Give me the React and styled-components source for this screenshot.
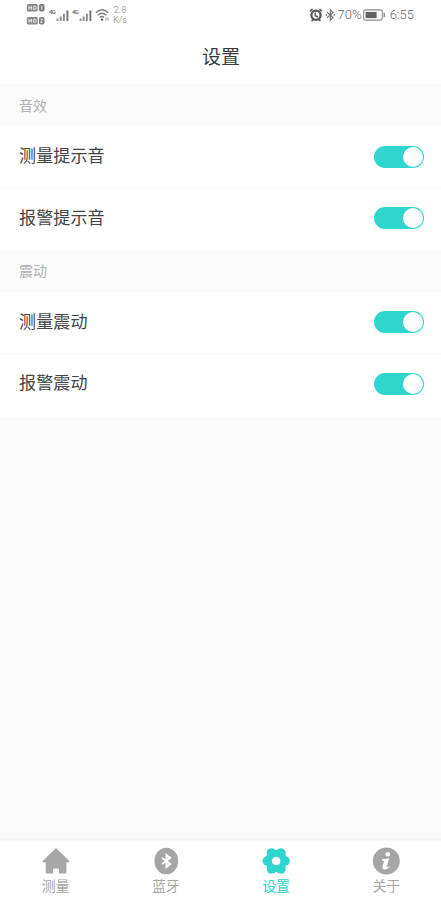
import React, { useState } from 'react'
import styled, { createGlobalStyle } from 'styled-components'

const ACCENT = '#2fd6cd'
const MUTED = '#a6a6a6'

const sections = [
  {
    title: '音效',
    rows: [
      { id: 'measureSound', label: '测量提示音' },
      { id: 'alarmSound', label: '报警提示音' },
    ],
  },
  {
    title: '震动',
    rows: [
      { id: 'measureVibration', label: '测量震动' },
      { id: 'alarmVibration', label: '报警震动' },
    ],
  },
]

const HdIcon = ({ sim }) => (
  <svg width='20' height='10' viewBox='0 0 20 10'>
    <rect x='0.8' y='1' width='11' height='7.6' rx='1.5' fill='#8a8a8a' />
    <path
      d='M3 3v3.6M5.4 3v3.6M3 4.8h2.4M7.6 3.2v3.2h1.1a1.6 1.6 0 0 0 0-3.2z'
      stroke='#f3f3f3'
      strokeWidth='0.9'
      fill='none'
    />
    <rect x='13' y='1' width='5.5' height='7.6' rx='1.8' fill='#7c7c7c' />
    {sim === 1 ? (
      <path d='M15.8 3v3.6' stroke='#fff' />
    ) : (
      <path d='M14.6 3.2h2l-2 3.2h2.2' stroke='#fff' strokeWidth='0.8' fill='none' />
    )}
  </svg>
)

const SignalIcon = () => (
  <svg width='14' height='12' viewBox='0 0 14 12'>
    <path d='M1.5 12V9.4M4.7 12V7.4M7.9 12V4.8' stroke='#8b8b8b' strokeWidth='1.9' />
    <path d='M11.4 12V1.4' stroke='#757575' strokeWidth='1.9' />
  </svg>
)

const WifiIcon = () => (
  <svg width='15' height='14' viewBox='0 0 15 14'>
    <g fill='none' stroke='#7b7b7b' strokeWidth='1.5'>
      <path d='M0.8 4.8Q7 -1.2 13.2 4.8' />
      <path d='M2.8 7.2Q7 3.3 11.2 7.2' />
      <path d='M4.8 9.5Q7 7.5 9.2 9.5' />
    </g>
    <circle cx='7' cy='11.6' r='1.2' fill='#555' />
    <path d='M11 9.5v3M13 9.5v3' stroke='#8a8a8a' strokeWidth='0.9' />
  </svg>
)

const AlarmIcon = () => (
  <svg width='14' height='14' viewBox='0 0 14 14'>
    <path d='M1 3.4 3.6 1M13 3.4 10.4 1M2.6 13l1.6-1.6M11.4 13l-1.6-1.6' stroke='#666' strokeWidth='1.8' />
    <circle cx='7' cy='7.3' r='4.6' fill='none' stroke='#555' strokeWidth='2.3' />
    <path d='M6.2 4.5v3.2L9 9' fill='none' stroke='#555' strokeWidth='1.4' />
  </svg>
)

const BluetoothIcon = () => (
  <svg width='11' height='14' viewBox='0 0 11 14'>
    <path
      d='M2 4.2l6 5.2-2.6 2.9V1.7L8 4.6 2 9.8'
      fill='none'
      stroke='#757575'
      strokeWidth='1.2'
    />
    <path d='M0.6 7h1.6M8.6 7h1.6' stroke='#757575' strokeWidth='1.4' />
  </svg>
)

const BatteryIcon = () => (
  <svg width='23' height='12' viewBox='0 0 23 12'>
    <rect x='0.7' y='0.9' width='18.6' height='10.2' rx='2' fill='none' stroke='#8d8d8d' strokeWidth='1.1' />
    <rect x='2.6' y='2.9' width='11' height='6.2' fill='#626262' />
    <path d='M21.2 3.8v4.4' stroke='#8d8d8d' strokeWidth='1.5' />
  </svg>
)

const HomeTabIcon = () => (
  <svg width='28' height='28' viewBox='0 0 28 28'>
    <path
      d='M14 1 27.3 14q.5 1.300-.6 1.300h-2.300v9.900q0 1.300-1.300 1.300H17V22.500q0-1-1-1h-4q-1 0-1 1v4H5q-1.300 0-1.300-1.300v-9.900H1.300q-1.200 0-.6-1.300z'
      fill='currentColor'
    />
  </svg>
)

const BluetoothTabIcon = () => (
  <svg width='28' height='28' viewBox='0 0 28 28'>
    <ellipse cx='14.3' cy='14' rx='11.9' ry='13.3' fill='currentColor' />
    <path
      d='M10.2 10.900l8 6.100-3.700 3V8l3.700 3-8 6.100'
      fill='none'
      stroke='#fff'
      strokeWidth='1.9'
    />
  </svg>
)

const SettingsTabIcon = () => (
  <svg width='28' height='28' viewBox='0 0 28 28'>
    <g fill='currentColor'>
      <circle cx='14.2' cy='14' r='11' />
      {/* six round petals around the hub */}
      <circle cx='5.2' cy='14' r='4.7' />
      <circle cx='23.2' cy='14' r='4.7' />
      <circle cx='9.5' cy='6' r='4.8' />
      <circle cx='18.9' cy='6' r='4.8' />
      <circle cx='9.5' cy='22' r='4.8' />
      <circle cx='18.9' cy='22' r='4.8' />
    </g>
    <circle cx='14.2' cy='14' r='4.3' fill='#fff' />
  </svg>
)

const InfoTabIcon = () => (
  <svg width='28' height='28' viewBox='0 0 28 28'>
    <circle cx='14.3' cy='14' r='13.5' fill='currentColor' />
    <circle cx='15.7' cy='7.3' r='2.3' fill='#fff' />
    <path
      d='M10 12.2q3.5-.1 7.100-1l-2.300 8.900q.9.300 2.300-.9l.5.9q-2.600 2.600-5.200 2.300-2.700-.4-1.900-3l1.500-5.300q-.8-.7-2-.7z'
      fill='#fff'
    />
  </svg>
)

const tabs = [
  { id: 'measure', label: '测量', Icon: HomeTabIcon },
  { id: 'bluetooth', label: '蓝牙', Icon: BluetoothTabIcon },
  { id: 'settings', label: '设置', Icon: SettingsTabIcon },
  { id: 'about', label: '关于', Icon: InfoTabIcon },
]

const App = () => {
  const [activeTab, setActiveTab] = useState('settings')
  const [values, setValues] = useState({
    measureSound: true,
    alarmSound: true,
    measureVibration: true,
    alarmVibration: true,
  })

  const toggleHandler = (id) => {
    setValues((prev) => ({ ...prev, [id]: !prev[id] }))
  }

  return (
    <Screen>
      <GlobalStyle />
      <StatusBar>
        <StatusGroup>
          <HdStack>
            <HdIcon sim={1} />
            <HdIcon sim={2} />
          </HdStack>
          <Signal>
            <NetworkType>4G</NetworkType>
            <SignalIcon />
          </Signal>
          <Signal>
            <NetworkType>4G</NetworkType>
            <SignalIcon />
          </Signal>
          <WifiIcon />
          <NetSpeed>
            <span>2.8</span>
            <span>K/s</span>
          </NetSpeed>
        </StatusGroup>
        <StatusGroup>
          <StatusIcons>
            <AlarmIcon />
            <BluetoothIcon />
          </StatusIcons>
          <StatusText>70%</StatusText>
          <BatteryIcon />
          <Clock>6:55</Clock>
        </StatusGroup>
      </StatusBar>
      <Header>
        <Title>设置</Title>
      </Header>
      <Content>
        {sections.map((section) => (
          <Section key={section.title}>
            <SectionTitle>{section.title}</SectionTitle>
            <Rows>
              {section.rows.map((row) => (
                <Row key={row.id}>
                  <RowLabel>{row.label}</RowLabel>
                  <Switch
                    role='switch'
                    aria-checked={values[row.id]}
                    aria-label={row.label}
                    $on={values[row.id]}
                    onClick={() => toggleHandler(row.id)}
                  >
                    <Knob />
                  </Switch>
                </Row>
              ))}
            </Rows>
          </Section>
        ))}
      </Content>
      <TabBar>
        {tabs.map(({ id, label, Icon }) => (
          <Tab key={id} $active={id === activeTab} onClick={() => setActiveTab(id)}>
            <Icon />
            <TabLabel>{label}</TabLabel>
          </Tab>
        ))}
      </TabBar>
    </Screen>
  )
}

export default App

const GlobalStyle = createGlobalStyle`
  * {
    box-sizing: border-box;
  }
  body {
    margin: 0;
    font-family: Roboto, 'Noto Sans CJK SC', sans-serif;
  }
  button {
    border: none;
    padding: 0;
    background: none;
    font-family: inherit;
    cursor: pointer;
  }
  svg {
    display: block;
    flex-shrink: 0;
  }
`
const Screen = styled.div`
  height: 100vh;
  display: flex;
  flex-direction: column;
  background: #fbfbfb;
  overflow: hidden;
`
const StatusBar = styled.div`
  height: 29px;
  padding: 0 27px 0 26px;
  display: flex;
  justify-content: space-between;
  align-items: center;
  background: #fff;
`
const StatusGroup = styled.div`
  height: 28px;
  display: flex;
  align-items: center;
`
const StatusIcons = styled.div`
  display: flex;
  gap: 2px;
  margin-right: 1px;
`
const HdStack = styled.div`
  display: flex;
  flex-direction: column;
  gap: 3px;
  margin-right: 3px;
`
const Signal = styled.div`
  width: 23px;
  display: flex;
  align-items: flex-end;
`
const NetworkType = styled.span`
  width: 7px;
  height: 13px;
  font-size: 6px;
  line-height: 7px;
  letter-spacing: -0.6px;
  font-weight: 600;
  color: #707070;
`
const NetSpeed = styled.div`
  display: flex;
  flex-direction: column;
  align-items: center;
  margin-left: 3px;
  font-size: 9px;
  line-height: 10px;
  color: #a8a8a8;
`
const StatusText = styled.span`
  margin: 1px 1px 0 1px;
  font-size: 13px;
  line-height: 16px;
  font-weight: 300;
  color: #666;
`
const Clock = styled(StatusText)`
  margin-left: 4px;
  margin-right: 0;
`
const Header = styled.header`
  height: 55px;
  display: flex;
  justify-content: center;
  align-items: center;
  background: #fff;
`
const Title = styled.h1`
  margin: 2px 0 0 1px;
  font-size: 19px;
  line-height: 28px;
  font-weight: 400;
  color: #3a3a3a;
`
const Content = styled.main`
  flex: 1;
  min-height: 0;
`
const SectionTitle = styled.h2`
  margin: 0;
  height: 42px;
  padding: 0 0 1px 19px;
  display: flex;
  align-items: center;
  font-size: 14px;
  font-weight: 400;
  color: #b0b0b0;
`
const Section = styled.section`
  & + & ${SectionTitle} {
    height: 40.5px;
    padding-bottom: 2px;
  }
`
const Rows = styled.div`
  padding-bottom: 2px;
  background: #fff;
`
const Row = styled.div`
  height: 61.5px;
  padding: 0 17px 0 19px;
  display: flex;
  justify-content: space-between;
  align-items: center;
  & + & {
    box-shadow: inset 0 1px #f9f9f9;
  }
`
const RowLabel = styled.span`
  margin-top: -4px;
  font-size: 17px;
  letter-spacing: 0.15px;
  color: #444;
`
const Switch = styled.button`
  width: 50px;
  height: 22px;
  padding: 1px;
  display: flex;
  justify-content: ${({ $on }) => ($on ? 'flex-end' : 'flex-start')};
  border-radius: 11px;
  background: ${({ $on }) => ($on ? ACCENT : '#d8d8d8')};
`
const Knob = styled.span`
  width: 20px;
  height: 20px;
  border-radius: 50%;
  background: #fff;
`
const TabBar = styled.nav`
  height: 62px;
  display: grid;
  grid-template-columns: repeat(4, 1fr);
  background: #fff;
  border-top: 3px solid #f6f6f6;
`
const Tab = styled.button`
  display: flex;
  flex-direction: column;
  align-items: center;
  padding: 6px 0 0 1px;
  color: ${({ $active }) => ($active ? ACCENT : MUTED)};
`
const TabLabel = styled.span`
  margin-top: 1px;
  font-size: 14px;
  line-height: 20px;
`
